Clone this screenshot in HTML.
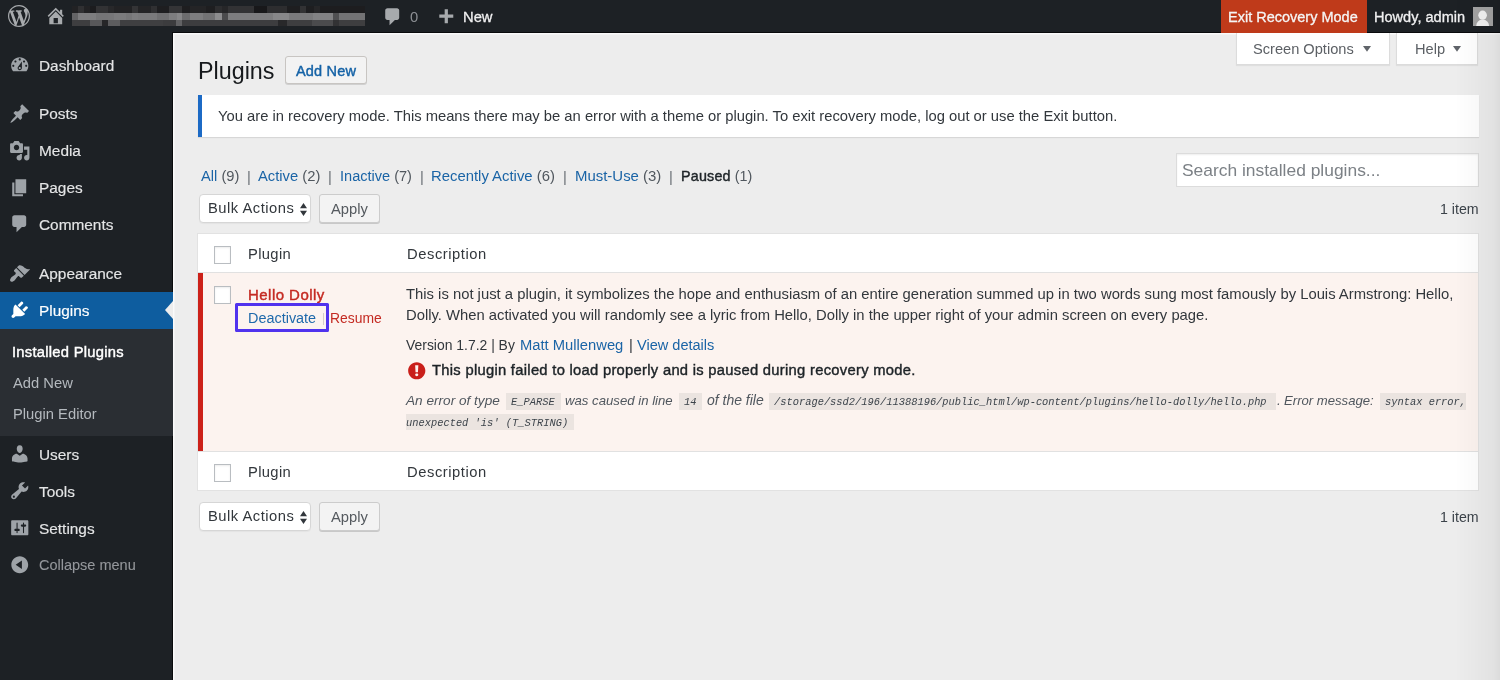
<!DOCTYPE html>
<html><head><meta charset="utf-8"><title>Plugins</title>
<style>
html,body{margin:0;padding:0;width:1500px;height:680px;overflow:hidden;background:#ededed}
body{position:relative;font-family:"Liberation Sans",sans-serif}
.r{position:absolute;box-sizing:content-box}
.t{position:absolute;white-space:pre;will-change:transform;font-family:"Liberation Sans",sans-serif}
code{font-family:"Liberation Mono",monospace;font-size:11.5px;background:#ebe4e0;padding:3px 5px;font-style:italic;color:#3c434a}
</style></head><body>
<div class="r" style="left:0px;top:0px;width:1500px;height:680px;background:#ededed;"></div>
<div class="r" style="left:0px;top:0px;width:1500px;height:32.5px;background:#1d2125;"></div>
<div class="r" style="left:0px;top:0px;width:172.5px;height:680px;background:#1d2125;"></div>
<div class="r" style="left:172px;top:32px;width:1328px;height:1px;background:#0a0b0d;"></div>
<div class="r" style="left:172px;top:32px;width:1px;height:648px;background:#0a0b0d;"></div>
<div class="r" style="left:173px;top:33px;width:1327px;height:1px;background:#fafafa;"></div>
<div class="r" style="left:173px;top:33px;width:1px;height:647px;background:#fafafa;"></div>
<div class="r" style="left:174px;top:34px;width:1326px;height:1px;background:#f3f3f3;"></div>
<div class="r" style="left:174px;top:34px;width:1px;height:646px;background:#f3f3f3;"></div>
<svg class="r" style="left:7.50px;top:4.90px" width="22.00" height="22.00" viewBox="0 0 20 20"><path fill="#a7aaad" d="M20 10c0-5.51-4.49-10-10-10C4.48 0 0 4.49 0 10c0 5.52 4.48 10 10 10 5.51 0 10-4.48 10-10zM7.78 15.37L4.37 6.22c.55-.02 1.17-.08 1.17-.08.5-.06.44-1.13-.06-1.11 0 0-1.45.11-2.37.11-.18 0-.37 0-.58-.01C4.12 2.69 6.87 1.11 10 1.11c2.33 0 4.45.87 6.05 2.34-.68-.11-1.65.39-1.65 1.58 0 .74.45 1.36.9 2.1.35.61.55 1.36.55 2.46 0 1.49-1.4 5-1.4 5l-3.03-8.37c.54-.02.82-.17.82-.17.5-.05.44-1.25-.06-1.22 0 0-1.44.12-2.38.12-.87 0-2.33-.12-2.33-.12-.5-.03-.56 1.2-.06 1.22l.92.08 1.26 3.41zM17.41 10c.24-.64.74-1.87.43-4.250.7 1.29 1.05 2.71 1.05 4.25 0 3.29-1.730 6.24-4.4 7.78.97-2.59 1.94-5.2 2.92-7.78zM6.1 18.09C3.12 16.65 1.11 13.53 1.11 10c0-1.3.23-2.48.72-3.59C3.25 10.3 4.67 14.2 6.1 18.09zm4.03-6.63l2.58 6.98c-.86.29-1.76.45-2.71.45-.79 0-1.570-.11-2.29-.33.81-2.38 1.62-4.74 2.42-7.1z"/></svg>
<svg class="r" style="left:45.45px;top:5.43px" width="21.50" height="21.50" viewBox="0 0 20 20"><path fill="#a7aaad" d="M16 8.5l1.53 1.53-1.06 1.06L10 4.62l-6.47 6.47-1.06-1.06L10 2.5l4 4v-2h2v4zm-6-2.46l6 5.99V18H4v-5.97zM12 17v-5H8v5h4z"/></svg>
<div class="r" style="left:72px;top:6px;width:6px;height:7px;background:#222224;"></div>
<div class="r" style="left:78px;top:6px;width:6px;height:7px;background:#303032;"></div>
<div class="r" style="left:84px;top:6px;width:6px;height:7px;background:#222224;"></div>
<div class="r" style="left:90px;top:6px;width:6px;height:7px;background:#1c1c1e;"></div>
<div class="r" style="left:96px;top:6px;width:12px;height:7px;background:#323234;"></div>
<div class="r" style="left:108px;top:6px;width:6px;height:7px;background:#28282a;"></div>
<div class="r" style="left:114px;top:6px;width:18px;height:7px;background:#222224;"></div>
<div class="r" style="left:132px;top:6px;width:6px;height:7px;background:#343436;"></div>
<div class="r" style="left:138px;top:6px;width:13px;height:7px;background:#242426;"></div>
<div class="r" style="left:151px;top:6px;width:6px;height:7px;background:#303032;"></div>
<div class="r" style="left:157px;top:6px;width:12px;height:7px;background:#1e1e20;"></div>
<div class="r" style="left:169px;top:6px;width:13px;height:7px;background:#343436;"></div>
<div class="r" style="left:182px;top:6px;width:8px;height:7px;background:#1e1e20;"></div>
<div class="r" style="left:190px;top:6px;width:16px;height:7px;background:#242426;"></div>
<div class="r" style="left:206px;top:6px;width:9px;height:7px;background:#1e1e20;"></div>
<div class="r" style="left:215px;top:6px;width:7px;height:7px;background:#2d2d2f;"></div>
<div class="r" style="left:222px;top:6px;width:6px;height:7px;background:#262628;"></div>
<div class="r" style="left:228px;top:6px;width:26px;height:7px;background:#323234;"></div>
<div class="r" style="left:254px;top:6px;width:13px;height:7px;background:#18181a;"></div>
<div class="r" style="left:267px;top:6px;width:20px;height:7px;background:#2d2d2f;"></div>
<div class="r" style="left:287px;top:6px;width:13px;height:7px;background:#1e1e20;"></div>
<div class="r" style="left:300px;top:6px;width:6px;height:7px;background:#323234;"></div>
<div class="r" style="left:306px;top:6px;width:8px;height:7px;background:#1e1e20;"></div>
<div class="r" style="left:314px;top:6px;width:6px;height:7px;background:#262628;"></div>
<div class="r" style="left:320px;top:6px;width:45px;height:7px;background:#1d1d1f;"></div>
<div class="r" style="left:72px;top:13px;width:6px;height:7px;background:#646466;"></div>
<div class="r" style="left:78px;top:13px;width:18px;height:7px;background:#7d7d7f;"></div>
<div class="r" style="left:96px;top:13px;width:12px;height:7px;background:#757577;"></div>
<div class="r" style="left:108px;top:13px;width:6px;height:7px;background:#767678;"></div>
<div class="r" style="left:114px;top:13px;width:12px;height:7px;background:#7b7b7d;"></div>
<div class="r" style="left:126px;top:13px;width:6px;height:7px;background:#767678;"></div>
<div class="r" style="left:132px;top:13px;width:6px;height:7px;background:#7d7d7f;"></div>
<div class="r" style="left:138px;top:13px;width:19px;height:7px;background:#7a7a7c;"></div>
<div class="r" style="left:157px;top:13px;width:12px;height:7px;background:#707072;"></div>
<div class="r" style="left:169px;top:13px;width:8px;height:7px;background:#7d7d7f;"></div>
<div class="r" style="left:177px;top:13px;width:5px;height:7px;background:#878789;"></div>
<div class="r" style="left:182px;top:13px;width:8px;height:7px;background:#6c6c6e;"></div>
<div class="r" style="left:190px;top:13px;width:13px;height:7px;background:#7d7d7f;"></div>
<div class="r" style="left:203px;top:13px;width:12px;height:7px;background:#737375;"></div>
<div class="r" style="left:215px;top:13px;width:7px;height:7px;background:#8c8c8e;"></div>
<div class="r" style="left:222px;top:13px;width:6px;height:7px;background:#4b4b4d;"></div>
<div class="r" style="left:228px;top:13px;width:45px;height:7px;background:#7d7d7f;"></div>
<div class="r" style="left:273px;top:13px;width:16px;height:7px;background:#878789;"></div>
<div class="r" style="left:289px;top:13px;width:24px;height:7px;background:#7a7a7c;"></div>
<div class="r" style="left:313px;top:13px;width:20px;height:7px;background:#828284;"></div>
<div class="r" style="left:333px;top:13px;width:6px;height:7px;background:#505052;"></div>
<div class="r" style="left:339px;top:13px;width:26px;height:7px;background:#737375;"></div>
<div class="r" style="left:72px;top:20px;width:18px;height:6px;background:#3e3e40;"></div>
<div class="r" style="left:90px;top:20px;width:12px;height:6px;background:#58585a;"></div>
<div class="r" style="left:102px;top:20px;width:6px;height:6px;background:#262628;"></div>
<div class="r" style="left:108px;top:20px;width:12px;height:6px;background:#5c5c5e;"></div>
<div class="r" style="left:120px;top:20px;width:43px;height:6px;background:#3f3f41;"></div>
<div class="r" style="left:163px;top:20px;width:13px;height:6px;background:#3c3c3e;"></div>
<div class="r" style="left:176px;top:20px;width:6px;height:6px;background:#626264;"></div>
<div class="r" style="left:182px;top:20px;width:96px;height:6px;background:#3d3d3f;"></div>
<div class="r" style="left:278px;top:20px;width:9px;height:6px;background:#28282a;"></div>
<div class="r" style="left:287px;top:20px;width:25px;height:6px;background:#3e3e40;"></div>
<div class="r" style="left:312px;top:20px;width:21px;height:6px;background:#4b4b4d;"></div>
<div class="r" style="left:333px;top:20px;width:6px;height:6px;background:#323234;"></div>
<div class="r" style="left:339px;top:20px;width:26px;height:6px;background:#3e3e40;"></div>
<svg class="r" style="left:381.54px;top:6.10px" width="21.50" height="21.50" viewBox="0 0 20 20"><path fill="#a7aaad" d="M5 2h9c1.1 0 2 .9 2 2v7c0 1.1-.9 2-2 2h-2l-5 5v-5H5c-1.1 0-2-.9-2-2V4c0-1.1.9-2 2-2z"/></svg>
<div class="t " style="left:410px;top:8px;font-size:14.75px;line-height:19px;color:#8c8f94;font-weight:400;">0</div>
<svg class="r" style="left:434.71px;top:7.36px" width="21.50" height="21.50" viewBox="0 0 20 20"><path fill="#a7aaad" d="M17 7v3h-5v5H9v-5H4V7h5V2h3v5h5z"/></svg>
<div class="t " style="left:463px;top:8px;font-size:14.75px;line-height:19px;color:#f0f0f1;font-weight:400;-webkit-text-stroke-width:0.3px">New</div>
<div class="r" style="left:1221px;top:0px;width:146px;height:32.5px;background:#bf3a1a;"></div>
<div class="t " style="left:1228px;top:8px;font-size:14.5px;line-height:19px;color:#f5f5f5;font-weight:400;-webkit-text-stroke-width:0.3px">Exit Recovery Mode</div>
<div class="t " style="left:1374px;top:8px;font-size:14.56px;line-height:19px;color:#f0f0f1;font-weight:400;-webkit-text-stroke-width:0.3px">Howdy, admin</div>
<div class="r" style="left:1473.3px;top:6.6px;width:19.299999999999955px;height:19.1px;background:#a3a3a3;"></div>
<svg class="r" style="left:1473.3px;top:6.6px" width="19.3" height="19.1" viewBox="0 0 19.3 19.1">
<ellipse cx="9.6" cy="8.2" rx="4.3" ry="4.6" fill="#f2f2f2"/>
<path d="M3.2 19.1 Q3.6 13.2 9.6 12.6 Q15.7 13.2 16.1 19.1 Z" fill="#f2f2f2"/>
</svg>
<div class="r" style="left:0px;top:291.5px;width:172.5px;height:37.10000000000002px;background:#0e5d9f;"></div>
<div class="r" style="left:0px;top:328.6px;width:172.5px;height:107.19999999999999px;background:#2a2e33;"></div>
<div class="r" style="left:164.5px;top:301px;width:0;height:0;border-top:9.3px solid transparent;border-bottom:9.3px solid transparent;border-right:8.5px solid #ededed"></div>
<div class="t " style="left:39px;top:56px;font-size:15.4px;line-height:20px;color:#e4e5e6;font-weight:400;-webkit-text-stroke-width:0.15px">Dashboard</div>
<div class="t " style="left:39px;top:104px;font-size:15.4px;line-height:20px;color:#e4e5e6;font-weight:400;-webkit-text-stroke-width:0.15px">Posts</div>
<div class="t " style="left:39px;top:141px;font-size:15.4px;line-height:20px;color:#e4e5e6;font-weight:400;-webkit-text-stroke-width:0.15px">Media</div>
<div class="t " style="left:39px;top:178px;font-size:15.4px;line-height:20px;color:#e4e5e6;font-weight:400;-webkit-text-stroke-width:0.15px">Pages</div>
<div class="t " style="left:39px;top:215px;font-size:15.4px;line-height:20px;color:#e4e5e6;font-weight:400;-webkit-text-stroke-width:0.15px">Comments</div>
<div class="t " style="left:39px;top:264px;font-size:15.4px;line-height:20px;color:#e4e5e6;font-weight:400;-webkit-text-stroke-width:0.15px">Appearance</div>
<div class="t " style="left:39px;top:301px;font-size:15.4px;line-height:20px;color:#ffffff;font-weight:400;-webkit-text-stroke-width:0.15px">Plugins</div>
<div class="t " style="left:39px;top:445px;font-size:15.4px;line-height:20px;color:#e4e5e6;font-weight:400;-webkit-text-stroke-width:0.15px">Users</div>
<div class="t " style="left:39px;top:482px;font-size:15.4px;line-height:20px;color:#e4e5e6;font-weight:400;-webkit-text-stroke-width:0.15px">Tools</div>
<div class="t " style="left:39px;top:519px;font-size:15.4px;line-height:20px;color:#e4e5e6;font-weight:400;-webkit-text-stroke-width:0.15px">Settings</div>
<div class="t " style="left:12px;top:343px;font-size:14.75px;line-height:19px;color:#ffffff;font-weight:400;-webkit-text-stroke-width:0.42px;letter-spacing:0.26px">Installed Plugins</div>
<div class="t " style="left:13px;top:374px;font-size:14.75px;line-height:19px;color:#b4b9be;font-weight:400;">Add New</div>
<div class="t " style="left:13px;top:405px;font-size:14.75px;line-height:19px;color:#b4b9be;font-weight:400;">Plugin Editor</div>
<div class="t " style="left:39px;top:556px;font-size:14.5px;line-height:19px;color:#94979b;font-weight:400;-webkit-text-stroke-width:0.1px">Collapse menu</div>
<svg class="r" style="left:8.80px;top:53.89px" width="21.50" height="21.50" viewBox="0 0 20 20"><path fill="#9ea3a8" d="M3.76 16h12.48c1.1-1.37 1.76-3.11 1.76-5 0-4.42-3.58-8-8-8s-8 3.58-8 8c0 1.89.66 3.63 1.76 5zM10 4c.55 0 1 .45 1 1s-.45 1-1 1-1-.45-1-1 .45-1 1-1zM6 6c.55 0 1 .45 1 1s-.45 1-1 1-1-.45-1-1 .45-1 1-1zm8 0c.55 0 1 .45 1 1s-.45 1-1 1-1-.45-1-1 .45-1 1-1zm-5.37 5.55L12 7v6c0 1.1-.9 2-2 2s-2-.9-2-2c0-.57.24-1.080.63-1.45zM4 10c.55 0 1 .45 1 1s-.45 1-1 1-1-.45-1-1 .45-1 1-1zm12 0c.55 0 1 .45 1 1s-.45 1-1 1-1-.45-1-1 .45-1 1-1zm-5 3c0-.55-.45-1-1-1s-1 .45-1 1 .45 1 1 1 1-.45 1-1z"/></svg>
<svg class="r" style="left:8.60px;top:102.95px" width="21.50" height="21.50" viewBox="0 0 20 20"><path fill="#9ea3a8" d="M10.44 3.02l1.82-1.82 6.36 6.35-1.83 1.82c-1.05-.68-2.48-.57-3.41.36l-.75.75c-.92.93-1.04 2.35-.35 3.41l-1.83 1.82-2.41-2.41-2.8 2.79c-.42.42-3.38 2.71-3.8 2.29s1.86-3.39 2.28-3.81l2.79-2.79L4.1 9.36l1.83-1.82c1.05.69 2.48.57 3.4-.36l.75-.75c.93-.92 1.05-2.35.36-3.41z"/></svg>
<svg class="r" style="left:8.55px;top:139.75px" width="21.50" height="21.50" viewBox="0 0 20 20"><path fill="#9ea3a8" d="M13 11V4c0-.55-.45-1-1-1h-1.67L9 1H5L3.67 3H2c-.55 0-1 .45-1 1v7c0 .55.45 1 1 1h10c.55 0 1-.45 1-1zM7 4.5c1.38 0 2.5 1.12 2.5 2.5S8.38 9.5 7 9.5 4.5 8.38 4.5 7 5.62 4.5 7 4.5zM14 6h5v10.5c0 1.38-1.12 2.5-2.5 2.5S14 17.88 14 16.5s1.12-2.5 2.5-2.5c.17 0 .34.02.5.05V9h-3V6zm-4 8.05V13h2v3.5c0 1.38-1.12 2.5-2.5 2.5S7 17.88 7 16.5 8.12 14 9.5 14c.17 0 .34.02.5.05z"/></svg>
<svg class="r" style="left:8.79px;top:176.90px" width="21.50" height="21.50" viewBox="0 0 20 20"><path fill="#9ea3a8" d="M6 15V2h10v13H6zm-1 1h8v2H3V5h2v11z"/></svg>
<svg class="r" style="left:8.69px;top:213.35px" width="21.50" height="21.50" viewBox="0 0 20 20"><path fill="#9ea3a8" d="M5 2h9c1.1 0 2 .9 2 2v7c0 1.1-.9 2-2 2h-2l-5 5v-5H5c-1.1 0-2-.9-2-2V4c0-1.1.9-2 2-2z"/></svg>
<svg class="r" style="left:8.58px;top:262.56px" width="21.50" height="21.50" viewBox="0 0 20 20"><path fill="#9ea3a8" d="M14.48 11.06L7.41 3.99l1.5-1.5c.5-.56 2.3-.47 3.51.32 1.21.8 1.43 1.28 2.91 2.1 1.18.64 2.45 1.26 4.45.85zm-.71.71L6.7 4.7 4.93 6.47c-.39.39-.39 1.02 0 1.41l1.06 1.06c.39.39.39 1.03 0 1.42-.6.6-1.43 1.11-2.21 1.69-.35.26-.7.53-1.010.84C1.43 14.23.4 16.08 1.4 17.07c.99 1 2.84-.03 4.18-1.36.31-.31.58-.66.85-1.02.57-.78 1.08-1.61 1.69-2.210.39-.39 1.02-.39 1.41 0l1.06 1.06c.39.39 1.02.39 1.41 0z"/></svg>
<svg class="r" style="left:8.80px;top:299.45px" width="21.50" height="21.50" viewBox="0 0 20 20"><path fill="#ffffff" d="M13.11 4.36L9.87 7.6 8 5.73l3.24-3.24c.35-.34 1.05-.2 1.56.32.52.51.66 1.21.31 1.55zm-8 1.77l.91-1.12 9.01 9.01-1.19.84c-.71.71-2.63 1.16-3.82 1.16H6.14L4.9 17.26c-.59.59-1.54.59-2.12 0-.59-.58-.59-1.53 0-2.12l1.24-1.24v-3.88c0-1.13.4-3.19 1.09-3.89zm7.26 3.97l3.24-3.24c.34-.35 1.04-.21 1.55.31.52.51.66 1.21.31 1.55l-3.24 3.25z"/></svg>
<svg class="r" style="left:8.80px;top:443.27px" width="21.50" height="21.50" viewBox="0 0 20 20"><path fill="#9ea3a8" d="M10 9.25c-2.27 0-2.73-3.44-2.73-3.44C7 4.02 7.82 2 9.97 2c2.16 0 2.98 2.02 2.71 3.81 0 0-.41 3.44-2.68 3.44zm0 2.57L12.72 10c2.39 0 4.52 2.33 4.52 4.53v2.49s-3.65 1.13-7.24 1.13c-3.65 0-7.24-1.13-7.24-1.13v-2.49c0-2.25 1.94-4.48 4.47-4.48z"/></svg>
<svg class="r" style="left:8.80px;top:480.33px" width="21.50" height="21.50" viewBox="0 0 20 20"><path fill="#9ea3a8" d="M16.68 9.77c-1.34 1.34-3.3 1.67-4.95.99l-5.41 6.52c-.99.99-2.59.99-3.580 0s-.99-2.59 0-3.57l6.52-5.42c-.68-1.65-.35-3.61.99-4.95 1.28-1.28 3.12-1.62 4.72-1.06l-2.89 2.89 2.82 2.82 2.86-2.87c.53 1.58.18 3.39-1.08 4.65zM3.81 16.21c.4.39 1.04.39 1.43 0 .4-.4.4-1.04 0-1.43-.39-.4-1.03-.4-1.43 0-.39.39-.39 1.03 0 1.43z"/></svg>
<svg class="r" style="left:9.25px;top:517.35px" width="21.50" height="21.50" viewBox="0 0 20 20"><path fill="#9ea3a8" d="M18 16V4c0-.55-.45-1-1-1H3c-.55 0-1 .45-1 1v12c0 .55.45 1 1 1h14c.55 0 1-.45 1-1zM8 11h1c.55 0 1 .45 1 1s-.45 1-1 1H8v1.5c0 .28-.22.5-.5.5s-.5-.22-.5-.5V13H6c-.55 0-1-.45-1-1s.45-1 1-1h1V5.5c0-.28.22-.5.5-.5s.5.22.5.5V11zm5-2h-1c-.55 0-1-.45-1-1s.45-1 1-1h1V5.5c0-.28.22-.5.5-.5s.5.22.5.5V7h1c.55 0 1 .45 1 1s-.45 1-1 1h-1v5.5c0 .28-.22.5-.5.5s-.5-.22-.5-.5V9z"/></svg>
<svg class="r" style="left:8.80px;top:554.10px" width="21.50" height="21.50" viewBox="0 0 20 20"><path fill="#9ea3a8" d="M10 2.16c4.33 0 7.84 3.51 7.84 7.84S14.33 17.84 10 17.84 2.16 14.33 2.16 10 5.71 2.16 10 2.16zm2 11.72V6.12L6.18 9.97z"/></svg>
<div class="t " style="left:198px;top:56px;font-size:23.3px;line-height:30px;color:#16191c;font-weight:400;">Plugins</div>
<div class="r" style="left:285.2px;top:56.3px;width:79.4px;height:26.2px;border:1px solid #c8c5c2;border-radius:3px;background:#f3f3f3;box-shadow:0 1px 0 #d0d0d0"></div>
<div class="t " style="left:296px;top:62px;font-size:14.5px;line-height:19px;color:#1462a6;font-weight:400;-webkit-text-stroke-width:0.42px;letter-spacing:0.17px">Add New</div>
<div class="r" style="left:197.5px;top:95px;width:1281.5px;height:41.5px;background:#ffffff;box-shadow:0 1px 1px rgba(0,0,0,0.09)"></div>
<div class="r" style="left:197.5px;top:95px;width:4.300000000000011px;height:41.5px;background:#1c6ac5;"></div>
<div class="t " style="left:218px;top:107px;font-size:14.77px;line-height:19px;color:#32373c;font-weight:400;">You are in recovery mode. This means there may be an error with a theme or plugin. To exit recovery mode, log out or use the Exit button.</div>
<div class="r" style="left:1236px;top:32.5px;width:151.5px;height:31px;background:#fff;border:1px solid #dcdcdc;border-top:none;box-shadow:0 1px 1px rgba(0,0,0,0.06)"></div>
<div class="r" style="left:1396px;top:32.5px;width:80.3px;height:31px;background:#fff;border:1px solid #dcdcdc;border-top:none;box-shadow:0 1px 1px rgba(0,0,0,0.06)"></div>
<div class="t " style="left:1253px;top:40px;font-size:14.62px;line-height:19px;color:#5c6065;font-weight:400;">Screen Options</div>
<div class="t " style="left:1415px;top:40px;font-size:14.62px;line-height:19px;color:#5c6065;font-weight:400;">Help</div>
<svg class="r" style="left:1362.6px;top:45.6px" width="8" height="6" viewBox="0 0 8 6"><path d="M0 0 H8 L4 5.8 Z" fill="#60646a"/></svg>
<svg class="r" style="left:1452.8px;top:45.6px" width="8" height="6" viewBox="0 0 8 6"><path d="M0 0 H8 L4 5.8 Z" fill="#60646a"/></svg>
<div class="t " style="left:201px;top:167px;font-size:14.7px;line-height:19px;color:#50575e;font-weight:400;"><span style="color:#1a64a6">All</span> (9)</div>
<div class="t " style="left:258px;top:167px;font-size:14.75px;line-height:19px;color:#50575e;font-weight:400;"><span style="color:#1a64a6">Active</span> (2)</div>
<div class="t " style="left:340px;top:167px;font-size:14.56px;line-height:19px;color:#50575e;font-weight:400;"><span style="color:#1a64a6">Inactive</span> (7)</div>
<div class="t " style="left:431px;top:167px;font-size:14.87px;line-height:19px;color:#50575e;font-weight:400;"><span style="color:#1a64a6">Recently Active</span> (6)</div>
<div class="t " style="left:575px;top:166px;font-size:14.95px;line-height:19px;color:#50575e;font-weight:400;"><span style="color:#1a64a6">Must-Use</span> (3)</div>
<div class="t " style="left:681px;top:167px;font-size:14.3px;line-height:19px;color:#50575e;font-weight:400;"><span style="color:#1d2327;letter-spacing:0.21px;-webkit-text-stroke-width:0.42px;">Paused</span> (1)</div>
<div class="t " style="left:247px;top:168px;font-size:14.75px;line-height:19px;color:#6a7075;font-weight:400;">|</div>
<div class="t " style="left:328px;top:168px;font-size:14.75px;line-height:19px;color:#6a7075;font-weight:400;">|</div>
<div class="t " style="left:420px;top:168px;font-size:14.75px;line-height:19px;color:#6a7075;font-weight:400;">|</div>
<div class="t " style="left:563px;top:168px;font-size:14.75px;line-height:19px;color:#6a7075;font-weight:400;">|</div>
<div class="t " style="left:669px;top:168px;font-size:14.75px;line-height:19px;color:#6a7075;font-weight:400;">|</div>
<div class="r" style="left:1176px;top:153px;width:301px;height:32px;background:#fff;border:1px solid #dcdcdc;box-shadow:inset 0 1px 2px rgba(0,0,0,0.07)"></div>
<div class="t " style="left:1182px;top:159px;font-size:17.42px;line-height:23px;color:#7c8186;font-weight:400;">Search installed plugins...</div>
<div class="r" style="left:199.3px;top:194px;width:110px;height:26.8px;background:#fff;border:1px solid #d6d6d6;border-radius:4px;box-shadow:0 1px 1px rgba(0,0,0,0.04)"></div>
<div class="t " style="left:208px;top:199px;font-size:14.75px;line-height:19px;color:#32373c;font-weight:400;letter-spacing:0.5px">Bulk Actions</div>
<svg class="r" style="left:300px;top:202.5px" width="7" height="13" viewBox="0 0 7 13"><path d="M3.5 0 L7 5.3 H0 Z M0 7.7 H7 L3.5 13 Z" fill="#32373c"/></svg>
<div class="r" style="left:319.3px;top:193.6px;width:59.2px;height:27.7px;background:#f3f3f3;border:1px solid #cccccc;border-radius:3px;box-shadow:0 1px 0 #c8c8c8"></div>
<div class="t " style="left:331px;top:200px;font-size:14.75px;line-height:19px;color:#555a5f;font-weight:400;">Apply</div>
<div class="t " style="left:1441px;top:200px;font-size:14.2px;line-height:18px;color:#3c434a;font-weight:400;left:auto;right:21.5px">1 item</div>
<div class="r" style="left:198px;top:233.7px;width:1280px;height:256.5px;background:#ffffff;box-shadow:0 0 0 1px #e2e2e2"></div>
<div class="r" style="left:198px;top:272px;width:1280px;height:1px;background:#e1e1e1;"></div>
<div class="r" style="left:198px;top:273px;width:1280px;height:178px;background:#fcf3ef;"></div>
<div class="r" style="left:198.2px;top:273px;width:4.600000000000023px;height:178px;background:#cc2119;"></div>
<div class="r" style="left:198px;top:451px;width:1280px;height:1px;background:#e1e1e1;"></div>
<div class="r" style="left:214px;top:246px;width:15px;height:15.5px;background:#fff;border:1px solid #b9bdc1;box-shadow:inset 0 1px 2px rgba(0,0,0,0.08)"></div>
<div class="r" style="left:214px;top:286px;width:15px;height:15.5px;background:#fff;border:1px solid #b9bdc1;box-shadow:inset 0 1px 2px rgba(0,0,0,0.08)"></div>
<div class="r" style="left:214px;top:464px;width:15px;height:15.5px;background:#fff;border:1px solid #b9bdc1;box-shadow:inset 0 1px 2px rgba(0,0,0,0.08)"></div>
<div class="t " style="left:248px;top:245px;font-size:14.75px;line-height:19px;color:#32373c;font-weight:400;letter-spacing:0.35px">Plugin</div>
<div class="t " style="left:407px;top:245px;font-size:14.75px;line-height:19px;color:#32373c;font-weight:400;letter-spacing:0.55px">Description</div>
<div class="t " style="left:248px;top:463px;font-size:14.75px;line-height:19px;color:#32373c;font-weight:400;letter-spacing:0.35px">Plugin</div>
<div class="t " style="left:407px;top:463px;font-size:14.75px;line-height:19px;color:#32373c;font-weight:400;letter-spacing:0.55px">Description</div>
<div class="t " style="left:248px;top:285px;font-size:15.0px;line-height:20px;color:#c42a22;font-weight:400;-webkit-text-stroke-width:0.42px;letter-spacing:0.46px">Hello Dolly</div>
<div class="r" style="left:234.6px;top:303px;width:88.5px;height:22.5px;border:3.2px solid #5032ee;border-radius:1.5px"></div>
<div class="t " style="left:248px;top:309px;font-size:14.43px;line-height:19px;color:#1e69ab;font-weight:400;">Deactivate</div>
<div class="r" style="left:323px;top:313px;width:1px;height:12px;background:#d6cdc9;"></div>
<div class="t " style="left:330px;top:309px;font-size:13.9px;line-height:18px;color:#c42a22;font-weight:400;">Resume</div>
<div class="t " style="left:406px;top:285px;font-size:14.82px;line-height:19px;color:#32373c;font-weight:400;">This is not just a plugin, it symbolizes the hope and enthusiasm of an entire generation summed up in two words sung most famously by Louis Armstrong: Hello,</div>
<div class="t " style="left:406px;top:306px;font-size:14.8px;line-height:19px;color:#32373c;font-weight:400;">Dolly. When activated you will randomly see a lyric from Hello, Dolly in the upper right of your admin screen on every page.</div>
<div class="t " style="left:406px;top:336px;font-size:13.93px;line-height:18px;color:#32373c;font-weight:400;">Version 1.7.2 | By</div>
<div class="t " style="left:520px;top:336px;font-size:14.76px;line-height:19px;color:#1a64a6;font-weight:400;">Matt Mullenweg</div>
<div class="t " style="left:629px;top:336px;font-size:14.75px;line-height:19px;color:#32373c;font-weight:400;">|</div>
<div class="t " style="left:637px;top:336px;font-size:14.55px;line-height:19px;color:#1a64a6;font-weight:400;">View details</div>
<svg class="r" style="left:405.80px;top:359.85px" width="21.50" height="21.50" viewBox="0 0 20 20"><path fill="#c91f1a" d="M10 2c4.42 0 8 3.58 8 8s-3.58 8-8 8-8-3.58-8-8 3.58-8 8-8zm1.13 9.38l.35-6.46H8.52l.35 6.46h2.26zm-.09 3.36c.24-.23.37-.55.37-.96 0-.42-.12-.74-.36-.97s-.59-.35-1.06-.35-.82.12-1.07.35-.37.55-.37.97c0 .41.13.73.38.96.26.23.61.34 1.06.34s.8-.11 1.05-.34z"/></svg>
<div class="t " style="left:432px;top:361px;font-size:14.75px;line-height:19px;color:#1d2327;font-weight:400;-webkit-text-stroke-width:0.42px;letter-spacing:0.287px">This plugin failed to load properly and is paused during recovery mode.</div>
<div class="t " style="left:406px;top:392px;font-size:13.61px;line-height:18px;color:#50575e;font-weight:400;font-style:italic">An error of type</div>
<div class="r" style="left:505.6px;top:392.8px;width:55.19999999999993px;height:16.80000000000001px;background:#ebe4e0;"></div>
<div class="t " style="left:511px;top:395px;font-size:10.4px;line-height:14px;color:#3c434a;font-weight:400;font-family:'Liberation Mono',monospace;font-style:italic">E_PARSE</div>
<div class="t " style="left:565px;top:392px;font-size:13.18px;line-height:17px;color:#50575e;font-weight:400;font-style:italic">was caused in line</div>
<div class="r" style="left:678.9px;top:392.8px;width:22.899999999999977px;height:16.80000000000001px;background:#ebe4e0;"></div>
<div class="t " style="left:684px;top:395px;font-size:10.4px;line-height:14px;color:#3c434a;font-weight:400;font-family:'Liberation Mono',monospace;font-style:italic">14</div>
<div class="t " style="left:707px;top:391px;font-size:13.99px;line-height:18px;color:#50575e;font-weight:400;font-style:italic">of the file</div>
<div class="r" style="left:769px;top:392.8px;width:506.5px;height:16.80000000000001px;background:#ebe4e0;"></div>
<div class="t " style="left:774px;top:395px;font-size:10.4px;line-height:14px;color:#3c434a;font-weight:400;font-family:'Liberation Mono',monospace;font-style:italic">/storage/ssd2/196/11388196/public_html/wp-content/plugins/hello-dolly/hello.php</div>
<div class="t " style="left:1277px;top:392px;font-size:13.5px;line-height:18px;color:#50575e;font-weight:400;font-style:italic">.</div>
<div class="t " style="left:1284px;top:392px;font-size:13.14px;line-height:17px;color:#50575e;font-weight:400;font-style:italic">Error message:</div>
<div class="r" style="left:1379.8px;top:392.8px;width:86.40000000000009px;height:16.80000000000001px;background:#ebe4e0;"></div>
<div class="t " style="left:1385px;top:395px;font-size:10.4px;line-height:14px;color:#3c434a;font-weight:400;font-family:'Liberation Mono',monospace;font-style:italic">syntax error,</div>
<div class="r" style="left:405.8px;top:413.6px;width:168.7px;height:16.399999999999977px;background:#ebe4e0;"></div>
<div class="t " style="left:406px;top:416px;font-size:10.4px;line-height:14px;color:#3c434a;font-weight:400;font-family:'Liberation Mono',monospace;font-style:italic">unexpected 'is' (T_STRING)</div>
<div class="r" style="left:199.3px;top:502px;width:110px;height:26.8px;background:#fff;border:1px solid #d6d6d6;border-radius:4px;box-shadow:0 1px 1px rgba(0,0,0,0.04)"></div>
<div class="t " style="left:208px;top:507px;font-size:14.75px;line-height:19px;color:#32373c;font-weight:400;letter-spacing:0.5px">Bulk Actions</div>
<svg class="r" style="left:300px;top:510.5px" width="7" height="13" viewBox="0 0 7 13"><path d="M3.5 0 L7 5.3 H0 Z M0 7.7 H7 L3.5 13 Z" fill="#32373c"/></svg>
<div class="r" style="left:319.3px;top:501.6px;width:59.2px;height:27.7px;background:#f3f3f3;border:1px solid #cccccc;border-radius:3px;box-shadow:0 1px 0 #c8c8c8"></div>
<div class="t " style="left:331px;top:508px;font-size:14.75px;line-height:19px;color:#555a5f;font-weight:400;">Apply</div>
<div class="t " style="left:1441px;top:508px;font-size:14.2px;line-height:18px;color:#3c434a;font-weight:400;left:auto;right:21.5px">1 item</div>
<div class="r" style="left:1455px;top:0px;width:45px;height:680px;background:linear-gradient(to right, rgba(0,0,0,0) 0%, rgba(0,0,0,0.02) 40%, rgba(0,0,0,0.045) 85%, rgba(0,0,0,0.075) 100%);"></div>
</body></html>
